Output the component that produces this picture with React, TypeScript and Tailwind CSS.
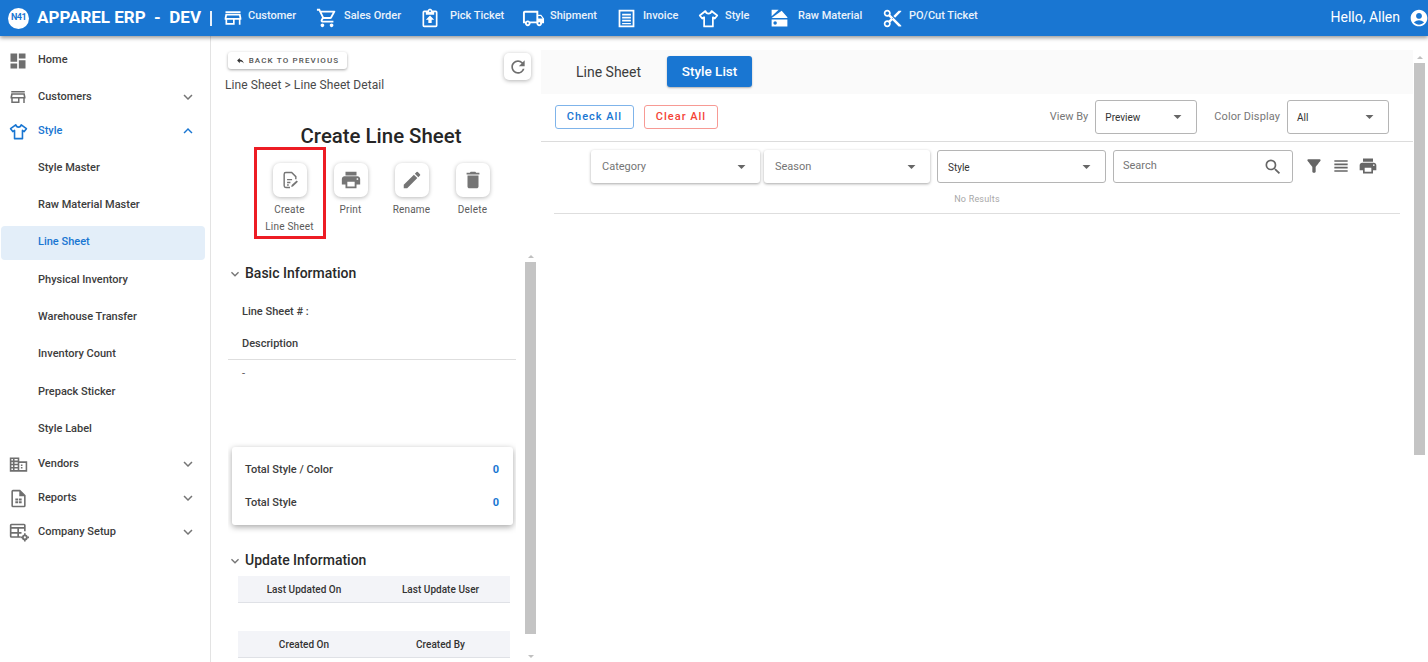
import { ReactNode } from 'react';
import {
  MdAccountCircle,
  MdArrowDropDown,
  MdContentCut,
  MdDashboard,
  MdDelete,
  MdEdit,
  MdExpandLess,
  MdExpandMore,
  MdFilterAlt,
  MdOutlineLocalShipping,
  MdOutlineShoppingCart,
  MdPrint,
  MdRefresh,
  MdReply,
  MdSearch,
} from 'react-icons/md';

const StoreIcon = ({ className }: { className?: string }) => (
  <svg viewBox="0 0 24 24" className={className} fill="currentColor">
    <path d="M3 4h18v2H3zM21 7H3l-1 5v2h1v6h11v-6h5v6h2v-6h1v-2zM12 18H5v-4h7zM4.200 12l.6-3h14.400l.6 3z" />
  </svg>
);

const PickIcon = ({ className }: { className?: string }) => (
  <svg viewBox="0 0 24 24" className={className} fill="currentColor">
    <path d="M19 3h-4.200C14.400 1.800 13.300 1 12 1s-2.400.8-2.800 2H5a2 2 0 0 0-2 2v16a2 2 0 0 0 2 2h14a2 2 0 0 0 2-2V5a2 2 0 0 0-2-2zm-7-.2a1 1 0 1 1 0 2 1 1 0 0 1 0-2zM19 21H5V5h2v3h10V5h2z" />
    <path d="M12 9l-5 5h3v4h4v-4h3z" />
  </svg>
);

const InvoiceIcon = ({ className }: { className?: string }) => (
  <svg viewBox="0 0 24 24" className={className} fill="currentColor">
    <path d="M3 2h18v20H3zm2 2v16h14V4z" />
    <path d="M7 6.500h10v2H7zM7 10h10v2H7zM7 13.500h10v2H7zM7 17h10v1.500H7z" />
  </svg>
);

const ShirtIcon = ({ className }: { className?: string }) => (
  <svg viewBox="0 0 24 24" className={className} fill="none" stroke="currentColor" strokeWidth="2" strokeLinejoin="round">
    <path d="M8.500 3.500 2 8.500l2.800 3.600 2.200-1.500V21h10V10.600l2.200 1.500L22 8.500l-6.500-5c-.5 2-1.800 3-3.500 3s-3-1-3.500-3z" />
  </svg>
);

const MaterialIcon = ({ className }: { className?: string }) => (
  <svg viewBox="0 0 24 24" className={className} fill="currentColor">
    <path d="M3 2h8L3 9.500zM3 11.500 14.500 3 21 10.500v1z" />
    <path d="M3 13h18v8H3zm4 2a2 2 0 1 0 0 4 2 2 0 0 0 0-4z" fillRule="evenodd" />
  </svg>
);

const CreateIcon = ({ className }: { className?: string }) => (
  <svg viewBox="0 0 24 24" className={className} fill="none" stroke="currentColor" strokeWidth="1.700">
    <path d="M12 21H7a2 2 0 0 1-2-2V5a2 2 0 0 1 2-2h7l5 5v3" />
    <path d="M8.500 11.500h6M8.500 15h4M8.500 18h2" />
    <path d="M13.500 20.500l.5-2.500 6-5.500 1.500 1.700-6 5.500z" fill="currentColor" stroke="none" />
  </svg>
);

const VendorIcon = ({ className }: { className?: string }) => (
  <svg viewBox="0 0 24 24" className={className} fill="currentColor">
    <path d="M1 3h12v5h10v13H1zm2 2v2h2V5zm4 0v2h4V5zM3 9v2h2V9zm4 0v2h4V9zm-4 4v2h2v-2zm4 0v2h4v-2zm-4 4v2h2v-2zm4 0v2h4v-2zm6-7v9h8v-9zm2 2h2v2h-2zm0 3h2v2h-2z" fillRule="evenodd" />
  </svg>
);

const ReportIcon = ({ className }: { className?: string }) => (
  <svg viewBox="0 0 24 24" className={className} fill="currentColor">
    <path d="M14 1H5a2 2 0 0 0-2 2v18a2 2 0 0 0 2 2h14a2 2 0 0 0 2-2V8zm5 20H5V3h8v6h6z" />
    <path d="M8 12h3.500v2.500H8zM12.500 12H16v2.500h-3.500zM8 15.500h3.500V18H8zM12.500 15.500H16V18h-3.500z" />
  </svg>
);

const SetupIcon = ({ className }: { className?: string }) => (
  <svg viewBox="0 0 24 24" className={className} fill="currentColor">
    <path d="M3 2h15a2 2 0 0 1 2 2v7h-2V8H12v4h3v2h-3v3h2v2H3a2 2 0 0 1-2-2V4a2 2 0 0 1 2-2zm0 2v2h15V4zm0 4v4h7V8zm0 6v3h7v-3z" fillRule="evenodd" />
    <circle cx="19" cy="18.500" r="3.500" />
    <circle cx="19" cy="18.500" r="1.300" fill="white" />
    <path d="M18 13.500h2v2h-2zM18 21.500h2v2h-2zM14 17.500h2v2h-2zM22 17.500h2v2h-2z" />
  </svg>
);

const LinesIcon = ({ className }: { className?: string }) => (
  <svg viewBox="0 0 24 24" className={className} fill="currentColor">
    <path d="M4 5h16v2H4zM4 9h16v2H4zM4 13h16v2H4zM4 17h16v2H4z" />
  </svg>
);

const navItems: { label: string; icon: ReactNode; box: string }[] = [
  { label: 'Customer', icon: <StoreIcon className="size-[20px]" />, box: 'w-[93px] gap-[5px]' },
  { label: 'Sales Order', icon: <MdOutlineShoppingCart className="size-[22px]" />, box: 'w-[104px] gap-[6px]' },
  { label: 'Pick Ticket', icon: <PickIcon className="size-[20px]" />, box: 'w-[102px] gap-[10px]' },
  { label: 'Shipment', icon: <MdOutlineLocalShipping className="size-[23px]" />, box: 'w-[94px] gap-[5px]' },
  { label: 'Invoice', icon: <InvoiceIcon className="size-[21px]" />, box: 'w-[82px] gap-[6px]' },
  { label: 'Style', icon: <ShirtIcon className="size-[21px]" />, box: 'w-[71px] gap-[6px]' },
  { label: 'Raw Material', icon: <MaterialIcon className="size-[21px]" />, box: 'w-[113px] gap-[8px]' },
  { label: 'PO/Cut Ticket', icon: <MdContentCut className="size-[21px]" />, box: 'w-[110px] gap-[6px]' },
];

const subItems = [
  'Style Master',
  'Raw Material Master',
  'Line Sheet',
  'Physical Inventory',
  'Warehouse Transfer',
  'Inventory Count',
  'Prepack Sticker',
  'Style Label',
];

function TopRow({ label, icon, open, height }: { label: string; icon: ReactNode; open?: boolean; height: string }) {
  return (
    <div className={`flex items-center pl-[9px] pr-[13px] ${height} ${open ? 'text-[#1976d2]' : 'text-[#6f6f6f]'}`}>
      <span className="w-[29px] flex items-center shrink-0">{icon}</span>
      <span className={`flex-1 text-[11px] font-medium ${open ? 'text-[#1976d2]' : 'text-[#3d3d3d]'}`}>{label}</span>
      {open ? <MdExpandLess className="size-[18px] text-[#1976d2]" /> : label !== 'Home' && <MdExpandMore className="size-[18px] text-[#757575]" />}
    </div>
  );
}

function Sidebar() {
  return (
    <aside className="w-[211px] shrink-0 border-r border-[#e3e3e3] pt-[6px]">
      <TopRow label="Home" height="h-[37px]" icon={<MdDashboard className="size-[20px] -ml-[1px]" />} />
      <TopRow label="Customers" height="h-[36px]" icon={<StoreIcon className="size-[18px]" />} />
      <TopRow label="Style" open height="h-[32px]" icon={<ShirtIcon className="size-[19px]" />} />
      <div className="pt-[2.500px] mb-[-0.500px]">
        {subItems.map((item) =>
          item === 'Line Sheet' ? (
            <div key={item} className="h-[34px] my-[1.650px] ml-[1px] mr-[5px] pl-[37px] flex items-center rounded-[4px] bg-[#e3eef9] text-[11px] font-medium text-[#1976d2]">
              {item}
            </div>
          ) : (
            <div key={item} className="h-[37.300px] pl-[38px] flex items-center text-[11px] font-medium text-[#3d3d3d]">
              {item}
            </div>
          )
        )}
      </div>
      <TopRow label="Vendors" height="h-[34px]" icon={<VendorIcon className="size-[19px]" />} />
      <TopRow label="Reports" height="h-[34px]" icon={<ReportIcon className="size-[19px]" />} />
      <TopRow label="Company Setup" height="h-[34px]" icon={<SetupIcon className="size-[20px]" />} />
    </aside>
  );
}

function ActionButton({ icon, label, boxed }: { icon: ReactNode; label: ReactNode; boxed?: boolean }) {
  return (
    <div className="w-[61px] flex flex-col items-center text-center">
      <div className="size-[34px] rounded-[7px] bg-white shadow-[0_1px_4px_rgba(0,0,0,0.28)] flex items-center justify-center text-[#757575]">{icon}</div>
      <div className={`mt-[4px] text-[10px] leading-[17px] tracking-[0.2px] text-[#5b5b5b] ${boxed ? '' : 'whitespace-nowrap'}`}>{label}</div>
    </div>
  );
}

function Scrollbar({ className }: { className?: string }) {
  return (
    <div className={`w-[11px] shrink-0 flex flex-col items-center ${className ?? ''}`}>
      <div className="h-[11px] flex items-center justify-center">
        <span className="border-x-[3px] border-b-[3px] border-x-transparent border-b-[#c0c0c0]" />
      </div>
      <div className="flex-1 w-full bg-[#c4c4c4]" />
    </div>
  );
}

function SectionTitle({ children }: { children: ReactNode }) {
  return (
    <div className="flex items-center">
      <MdExpandMore className="size-[16px] text-[#757575] -ml-[1px] mr-[2px]" />
      <span className="text-[14px] font-medium text-[#2a2a2a]">{children}</span>
    </div>
  );
}

function InfoHeader({ left, right }: { left: string; right: string }) {
  return (
    <div className="h-[27px] bg-[#f3f4f8] border-b border-[#dfe1e6] grid grid-cols-2 items-center text-center text-[10px] tracking-[0.03px] font-medium text-[#333]">
      <span className="pr-[4px]">{left}</span>
      <span className="pr-[3px]">{right}</span>
    </div>
  );
}

function DetailPanel() {
  return (
    <section className="w-[330px] shrink-0 flex flex-col h-[626px]">
      <div className="h-[215px] shrink-0 pl-[14px] pr-[10px] pt-[16px]">
        <div className="flex justify-between">
          <div>
            <div className="ml-[3px] w-[119px] h-[17px] rounded-[3px] bg-white shadow-[0_1px_3px_rgba(0,0,0,0.35)] flex items-center justify-center gap-[4px] text-[8px] font-medium tracking-[1.150px] text-[#555]">
              <MdReply className="size-[9px] text-[#333]" />
              BACK TO PREVIOUS
            </div>
            <div className="mt-[9px] text-[12px] leading-[14px] tracking-[0.07px] text-[#4a4a4a]">Line Sheet &gt; Line Sheet Detail</div>
          </div>
          <div className="mt-[1px] size-[27px] rounded-[5px] bg-white shadow-[0_1px_4px_rgba(0,0,0,0.3)] flex items-center justify-center">
            <MdRefresh className="size-[20px] text-[#6f6f6f]" />
          </div>
        </div>
        <h1 className="mt-[31px] ml-[6px] text-center text-[20.400px] leading-[26px] font-medium text-[#262626]">Create Line Sheet</h1>
        <div className="relative mt-[14px] ml-[34px] flex">
          {/* red annotation sits over the first button */}
          <div className="absolute left-[-5px] top-[-16px] w-[72px] h-[92px] border-[3px] border-[#ed1c24]" />
          <ActionButton boxed icon={<CreateIcon className="size-[20px]" />} label={<>Create<br />Line Sheet</>} />
          <ActionButton icon={<MdPrint className="size-[22px]" />} label="Print" />
          <ActionButton icon={<MdEdit className="size-[22px]" />} label="Rename" />
          <ActionButton icon={<MdDelete className="size-[22px]" />} label="Delete" />
        </div>
      </div>
      <div className="flex-1 min-h-0 flex pl-[17px]">
        <div className="w-[288px] overflow-hidden pt-[12px]">
          <SectionTitle>Basic Information</SectionTitle>
          <div className="mt-[21px] pl-[14px] text-[11px] leading-[14px] font-medium text-[#3d3d3d]">Line Sheet # :</div>
          <div className="mt-[18px] pl-[14px] text-[11px] leading-[14px] font-medium text-[#3d3d3d]">Description</div>
          <div className="mt-[8px] border-t border-[#dedede] pt-[6px] pl-[14px] h-[88px] text-[11px] text-[#555]">-</div>
          <div className="ml-[4px] w-[281px] h-[78px] rounded-[3px] bg-white shadow-[0_2px_6px_rgba(0,0,0,0.35)] pl-[13px] pr-[14px] py-[7px] text-[11px] font-medium text-[#3d3d3d]">
            <div className="h-[33px] flex items-center justify-between">
              <span>Total Style / Color</span>
              <span className="text-[#1976d2] font-bold">0</span>
            </div>
            <div className="h-[32px] flex items-center justify-between">
              <span>Total Style</span>
              <span className="text-[#1976d2] font-bold">0</span>
            </div>
          </div>
          <div className="mt-[25px]">
            <SectionTitle>Update Information</SectionTitle>
          </div>
          <div className="ml-[10px] mr-[6px] mt-[5px]">
            <InfoHeader left="Last Updated On" right="Last Update User" />
            <div className="h-[28px]" />
            <InfoHeader left="Created On" right="Created By" />
          </div>
        </div>
        <div className="ml-[9px] w-[11px]">
          <Scrollbar className="h-[383px]" />
          <div className="mt-[21px] flex justify-center">
            <span className="border-x-[3px] border-t-[3px] border-x-transparent border-t-[#c0c0c0]" />
          </div>
        </div>
      </div>
    </section>
  );
}

function Dropdown({ label, box }: { label: string; box: string }) {
  return (
    <div className={`${box} shrink-0 rounded-[3px] bg-white flex items-center justify-between pr-[9px]`}>
      <span className="pt-[1px]">{label}</span>
      <MdArrowDropDown className="size-[19px] text-[#666]" />
    </div>
  );
}

function StylePanel() {
  return (
    <section className="flex-1 flex h-[626px] min-w-0">
      <div className="w-[872px] shrink-0 pt-[14px]">
        <div className="h-[44px] bg-[#fafafa] flex items-center pl-[35px]">
          <span className="text-[14px] text-[#3d3d3d] mr-[26px]">Line Sheet</span>
          <span className="-mt-[2px] pt-[1px] w-[85px] h-[31px] rounded-[3px] bg-[#1976d2] shadow-[0_1px_2px_rgba(0,0,0,0.3)] flex items-center justify-center text-[13.500px] font-medium text-white">Style List</span>
        </div>
        <div className="h-[48px] border-b border-[#dcdcdc] flex items-center pl-[14px] pr-[24px] pb-[2px]">
          <span className="mt-[1px] pt-[1px] w-[79px] h-[24px] rounded-[3px] border border-[#7fb4ea] flex items-center justify-center text-[11px] font-medium tracking-[1px] text-[#1976d2]">Check All</span>
          <span className="mt-[1px] pt-[1px] ml-[10px] w-[74px] h-[24px] rounded-[3px] border border-[#f79a94] flex items-center justify-center text-[11px] font-medium tracking-[1px] text-[#f44336]">Clear All</span>
          <span className="ml-auto pt-[2px] text-[11px] text-[#777]">View By</span>
          <div className="ml-[7px]">
            <Dropdown label="Preview" box="w-[102px] h-[34px] border border-[#b5b5b5] pl-[9px] text-[10px] text-[#333]" />
          </div>
          <span className="ml-[17px] pt-[2px] text-[11px] tracking-[0.1px] text-[#777]">Color Display</span>
          <div className="ml-[7px]">
            <Dropdown label="All" box="w-[102px] h-[34px] border border-[#b5b5b5] pl-[9px] text-[10px] text-[#333]" />
          </div>
        </div>
        <div className="ml-[50px] mt-[8px] flex items-center">
          <Dropdown label="Category" box="w-[169px] h-[33px] shadow-[0_1px_3px_rgba(0,0,0,0.35)] pl-[11px] text-[11px] text-[#757575]" />
          <div className="ml-[4px]">
            <Dropdown label="Season" box="w-[166px] h-[33px] shadow-[0_1px_3px_rgba(0,0,0,0.35)] pl-[11px] text-[11px] text-[#757575]" />
          </div>
          <div className="ml-[7px]">
            <Dropdown label="Style" box="w-[169px] h-[33px] border border-[#b5b5b5] pl-[10px] text-[10px] text-[#333]" />
          </div>
          <div className="ml-[7px] w-[180px] h-[33px] rounded-[3px] border border-[#b5b5b5] flex items-center justify-between pl-[9px] pr-[9px] text-[11px] text-[#757575]">
            <span>Search</span>
            <MdSearch className="size-[20px] text-[#666]" />
          </div>
          <MdFilterAlt className="-mt-[2px] ml-[11px] size-[20px] text-[#666]" />
          <LinesIcon className="-mt-[2px] ml-[7px] size-[20px] text-[#666]" />
          <MdPrint className="-mt-[2px] ml-[7px] size-[20px] text-[#666]" />
        </div>
        <div className="ml-[13px] mr-[13px] mt-[8px] h-[23px] border-b border-[#dedede] flex items-center justify-center pb-[5px] text-[9px] tracking-[0.2px] text-[#a8a8a8]">No Results</div>
      </div>
      <Scrollbar className="ml-[1px] mt-[16px] h-[403px]" />
    </section>
  );
}

export default function App() {
  return (
    <div className="w-[1428px] h-[662px] overflow-hidden bg-white font-['Roboto',sans-serif]">
      <header className="relative z-10 h-[36px] bg-[#1976d2] shadow-[0_2px_4px_rgba(0,0,0,0.4)] flex items-center text-white">
        <div className="ml-[8px] size-[21px] rounded-full bg-white flex items-center justify-center text-[9px] font-bold tracking-[-0.5px] text-[#1976d2]">N41</div>
        <span className="ml-[8px] w-[173px] shrink-0 whitespace-pre text-[17px] font-bold">APPAREL ERP  -  DEV</span>
        <span className="w-[2px] h-[15px] bg-white opacity-90" />
        <nav className="ml-[11px] flex items-center">
          {navItems.map((item) => (
            <div key={item.label} className={`${item.box} shrink-0 flex items-center text-[11px] font-medium text-[#eaf2fb]`}>
              <span className="text-white flex items-center">{item.icon}</span>
              <span className="-mt-[3px] whitespace-nowrap">{item.label}</span>
            </div>
          ))}
        </nav>
        <span className="ml-auto text-[14px] -mt-[1px]">Hello, Allen</span>
        <MdAccountCircle className="ml-[9px] mr-[-1px] size-[20px]" />
      </header>
      <main className="flex">
        <Sidebar />
        <DetailPanel />
        <StylePanel />
      </main>
    </div>
  );
}
